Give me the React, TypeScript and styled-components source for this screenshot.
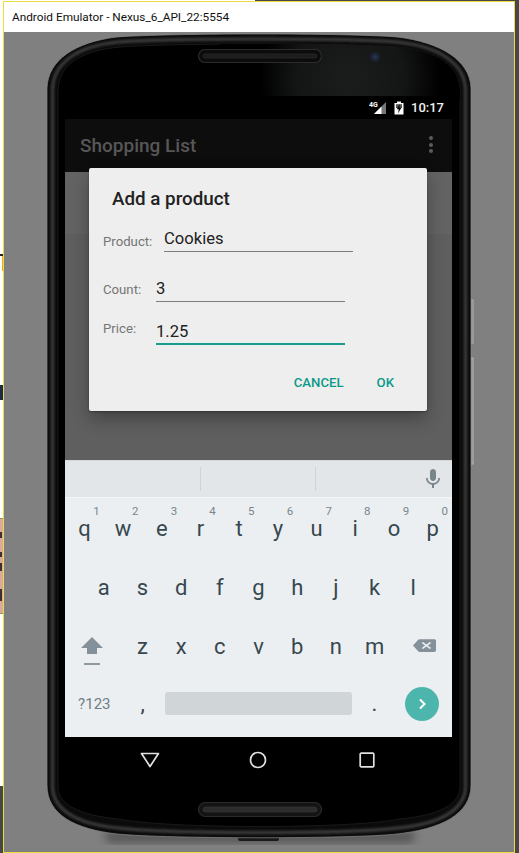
import React from "react";
import styled, { createGlobalStyle } from "styled-components";

const Global = createGlobalStyle`
  html, body { margin: 0; padding: 0; background: #45474a; }
  * { box-sizing: border-box; }
  body { font-family: Roboto, "Liberation Sans", sans-serif; overflow: hidden; }
`;

const Desktop = styled.div`
  width: 519px;
  height: 853px;
  display: flex;
  flex-direction: column;
  background: #45474a;
  overflow: hidden;
`;
const TopEdge = styled.div`
  height: 1px;
  width: 255px;
  background: #fff;
  flex: none;
`;
const Main = styled.div`
  flex: 1;
  display: flex;
`;
const LeftStrip = styled.div`
  width: 3px;
  flex: none;
  display: flex;
  flex-direction: column;
  background: #fff;
`;
const Gap = styled.div<{ $h: number }>`
  height: ${(p) => p.$h}px;
  flex: none;
`;
const Fragment = styled.div<{ $h: number; $c: string; $right?: string }>`
  height: ${(p) => p.$h}px;
  flex: none;
  background: ${(p) => p.$c};
  border-right: ${(p) => (p.$right ? `1px solid ${p.$right}` : "none")};
`;
const PinkBlock = styled.div`
  height: 96px;
  flex: none;
  background: #d9a9a2;
  border-top: 1px solid #8c9a5c;
  border-bottom: 1px solid #8c9a5c;
  display: flex;
  flex-direction: column;
`;
const PinkMark = styled.div<{ $h: number; $mt: number }>`
  height: ${(p) => p.$h}px;
  margin-top: ${(p) => p.$mt}px;
  background: #3a2f3a;
  width: 2px;
  flex: none;
`;
const DarkEnd = styled.div`
  flex: 1;
  background: #45474a;
`;
const Win = styled.div`
  width: 512px;
  height: 852px;
  flex: none;
  border: 1px solid #ecdc3e;
  display: flex;
  flex-direction: column;
`;
const TitleBar = styled.div`
  height: 30px;
  flex: none;
  background: #fff;
  color: #111;
  font: 400 11.8px/30px Roboto, "Liberation Sans", Arial, sans-serif;
  padding-left: 8px;
`;
const Stage = styled.div`
  flex: 1;
  position: relative;
  background: #808080;
  padding: 64px 0 0 61px;
`;
const Shell = styled.svg`
  position: absolute;
  left: 0;
  top: 0;
  width: 510px;
  height: 820px;
`;
const Screen = styled.div`
  position: relative;
  width: 387px;
  height: 688px;
  background: #000;
  display: flex;
  flex-direction: column;
`;
const StatusBar = styled.div`
  height: 23px;
  flex: none;
  display: flex;
  align-items: center;
  justify-content: flex-end;
  padding-right: 8px;
  color: #f2f2f2;
  font-size: 13px;
  font-weight: 500;
  gap: 7px;
`;
const ActionBar = styled.div`
  height: 53px;
  flex: none;
  background: #0d0d0d;
  display: flex;
  align-items: center;
  justify-content: space-between;
  padding: 0 19px 0 15px;
`;
const AppTitle = styled.div`
  color: #575757;
  font-size: 19px;
  font-weight: 500;
`;
const Dots = styled.div`
  display: flex;
  flex-direction: column;
  gap: 2.5px;
  margin-bottom: 2px;
`;
const Dot = styled.span`
  width: 4px;
  height: 4px;
  border-radius: 50%;
  background: #5c5c5c;
`;
const Dim = styled.div`
  height: 288px;
  flex: none;
  position: relative;
  background: #5f5f5f;
`;
const ListRow = styled.div`
  height: 62px;
  background: #636363;
`;
const Dialog = styled.div`
  position: absolute;
  left: 24px;
  top: -4px;
  width: 338px;
  height: 243px;
  background: #eeeeee;
  border-radius: 2px;
  padding-top: 17px;
  box-shadow: 0 8px 18px rgba(0, 0, 0, 0.3), 0 1px 2px rgba(0, 0, 0, 0.3);
`;
const DialogTitle = styled.div`
  padding-left: 23px;
  color: #212121;
  font-size: 18.8px;
  line-height: 28px;
  font-weight: 500;
`;
const FieldRow = styled.div<{ $mt: number }>`
  display: flex;
  align-items: flex-start;
  margin-top: ${(p) => p.$mt}px;
  padding-left: 14px;
`;
const FieldLabel = styled.div<{ $w: number; $pt: number }>`
  width: ${(p) => p.$w}px;
  padding-top: ${(p) => p.$pt}px;
  color: #757575;
  font-size: 13.2px;
  line-height: 20px;
`;
const FieldValue = styled.div<{ $active?: boolean }>`
  width: 189px;
  height: 30px;
  color: #212121;
  font-size: 16.6px;
  line-height: 34px;
  border-bottom: ${(p) => (p.$active ? "2px solid #1a9c8c" : "1px solid #7c7c7c")};
`;
const DialogActions = styled.div`
  display: flex;
  justify-content: flex-end;
  gap: 33px;
  margin-top: 19px;
  padding-right: 33px;
  height: 36px;
  align-items: center;
`;
const ActionText = styled.div`
  color: #0a9a88;
  font-size: 13.2px;
  font-weight: 500;
`;
const Keyboard = styled.div`
  height: 277px;
  flex: none;
  background: #eceff1;
  display: flex;
  flex-direction: column;
`;
const Suggestions = styled.div`
  height: 38px;
  flex: none;
  background: #e3e6e8;
  border-top: 1px solid #d6d9db;
  border-bottom: 1px solid #f3f5f6;
  display: grid;
  grid-template-columns: 136px 115px 114px 22px;
  align-items: center;
`;
const SuggestCell = styled.div`
  height: 24px;
  border-right: 1px solid #d0d4d6;
`;
const MicWrap = styled.div`
  display: flex;
  margin-left: -9px;
`;
const KeyRow = styled.div<{ $h: number; $pb?: number }>`
  height: ${(p) => p.$h}px;
  flex: none;
  display: flex;
  justify-content: center;
  align-items: center;
  padding-bottom: ${(p) => p.$pb ?? 0}px;
`;
const Key = styled.div`
  position: relative;
  width: 38.7px;
  height: 100%;
  display: flex;
  align-items: center;
  justify-content: center;
  color: #37474f;
  font-size: 22px;
`;
const Hint = styled.span`
  position: absolute;
  top: 6px;
  right: 4px;
  color: #78868c;
  font-size: 11.5px;
`;
const SideKey = styled.div`
  width: 58px;
  height: 100%;
  display: flex;
  align-items: center;
  justify-content: center;
`;
const ShiftIcon = styled.svg`
  margin: 9px 4px 0 0;
`;
const DeleteIcon = styled.svg`
  margin: -2px 0 0 4px;
`;
const SymbolKey = styled(SideKey)`
  color: #6f7f87;
  font-size: 15px;
`;
const PunctKey = styled.div`
  width: 38.7px;
  height: 100%;
  display: flex;
  align-items: center;
  justify-content: center;
  color: #37474f;
  font-size: 22px;
`;
const SpaceWrap = styled.div`
  width: 193px;
  display: flex;
  justify-content: center;
`;
const SpaceBar = styled.div`
  width: 187px;
  height: 23px;
  border-radius: 3px;
  background: #d0d5d8;
`;
const GoKey = styled.div`
  width: 34px;
  height: 34px;
  margin: 0 13px 0 11px;
  border-radius: 50%;
  background: #4db6ac;
  display: flex;
  align-items: center;
  justify-content: center;
`;
const NavBar = styled.div`
  flex: 1;
  display: flex;
  justify-content: center;
  align-items: center;
  padding: 0 1px 1px 0;
`;
const NavCell = styled.div`
  width: 108.5px;
  display: flex;
  justify-content: center;
`;

const row1 = [["q","1"],["w","2"],["e","3"],["r","4"],["t","5"],["y","6"],["u","7"],["i","8"],["o","9"],["p","0"]];
const row2 = ["a","s","d","f","g","h","j","k","l"];
const row3 = ["z","x","c","v","b","n","m"];

const outer = "M47 88 C48 60 75 42 117 37 C170 33 350 33 397 37 C440 42 470 60 471 88 L471 785 C471 815 440 829 397 834 C350 839 170 839 117 834 C75 829 47 815 47 785 Z";
const middle = "M52.5 90 C53 63 77 46 118 42 C170 38 350 38 397 42 C438 46 465 63 465.5 90 L465.5 786 C465.5 810 440 824 398 828 C350 834 170 834 118 828 C77 824 52.5 810 52.5 786 Z";
const face = "M58 92 C58 66 78 51 120 47 C170 43 350 43 397 47 C438 51 460 66 460 92 L460 787 C460 804 440 815 400 819 C350 829 170 829 118 819 C78 815 58 804 58 787 Z";

function PhoneShell() {
  return (
    <Shell viewBox="4 32 510 820">
      <defs>
        <radialGradient id="glare" cx="350" cy="78" r="90" gradientUnits="userSpaceOnUse">
          <stop offset="0" stopColor="#1b1d1d" />
          <stop offset="0.6" stopColor="#141515" />
          <stop offset="1" stopColor="#000" />
        </radialGradient>
        <clipPath id="faceClip"><path d={face} /></clipPath>
        <filter id="soft"><feGaussianBlur stdDeviation="1" /></filter>
        <filter id="softer"><feGaussianBlur stdDeviation="4" /></filter>
      </defs>
      <rect x="105" y="830" width="310" height="13" rx="6" fill="#4a4a4a" filter="url(#softer)" opacity="0.75" />
      <rect x="238" y="836" width="41" height="5" rx="2" fill="#1a1a1a" />
      <rect x="471" y="300" width="2" height="43" fill="none" stroke="#bdbdbd" strokeWidth="0.8" />
      <rect x="471" y="358" width="2" height="106" fill="none" stroke="#c8c8c8" strokeWidth="0.8" />
      <path d={outer} fill="#0b0b0b" stroke="#8a8a8a" strokeWidth="0.7" />
      <path d={middle} fill="none" stroke="#383838" strokeWidth="3.5" filter="url(#soft)" />
      <path d={face} fill="#000" stroke="#191919" strokeWidth="1" />
      <g clipPath="url(#faceClip)">
        <rect x="220" y="40" width="245" height="60" fill="url(#glare)" />
      </g>
      <rect x="198.5" y="49.5" width="123" height="13" rx="6.5" fill="#0c0c0c" stroke="#2c2c2c" strokeWidth="1.2" />
      <rect x="203" y="54" width="114" height="4" rx="2" fill="#1c1c1c" stroke="#303030" strokeWidth="0.6" />
      <circle cx="375" cy="57" r="5" fill="#1b2233" />
      <circle cx="375" cy="57" r="2.5" fill="#252f4a" />
      <rect x="198.5" y="802.5" width="123" height="14" rx="7" fill="#141414" stroke="#2a2a2a" strokeWidth="1.2" />
      <rect x="203" y="807" width="114" height="5" rx="2.5" fill="#2c2c2c" stroke="#3a3a3a" strokeWidth="0.6" />
    </Shell>
  );
}

function SignalIcon() {
  return (
    <svg width="18" height="14" viewBox="0 0 18 14">
      <path d="M5 13 L17 1 V13 Z" fill="#777" />
      <path d="M5 13 L12.5 5.5 V13 Z" fill="#fff" />
      <text x="0" y="6" fill="#fff" fontSize="7" fontWeight="700" fontFamily="Roboto, sans-serif">4G</text>
    </svg>
  );
}
function BatteryIcon() {
  return (
    <svg width="10" height="14" viewBox="0 0 10 14">
      <path d="M3 0.5 H7 V2 H9.5 V13.5 H0.5 V2 H3 Z" fill="#fff" />
      <path d="M2 3.2 H8 V7 H2 Z" fill="#555" />
      <path d="M5.8 3 L2.8 8.2 H4.8 L4 12.5 L7.4 6.8 H5.3 Z" fill="#000" />
    </svg>
  );
}

export default function App() {
  return (
    <Desktop>
      <Global />
      <TopEdge />
      <Main>
        <LeftStrip>
          <Gap $h={253} />
          <Fragment $h={2} $c="#222" />
          <Fragment $h={15} $c="#fff" $right="#e8a92c" />
          <Gap $h={114} />
          <Fragment $h={15} $c="#1b2a4d" />
          <Gap $h={118} />
          <PinkBlock>
            <PinkMark $h={6} $mt={13} />
            <PinkMark $h={5} $mt={14} />
            <PinkMark $h={8} $mt={6} />
            <PinkMark $h={12} $mt={18} />
          </PinkBlock>
          <Gap $h={172} />
          <DarkEnd />
        </LeftStrip>
        <Win>
          <TitleBar>Android Emulator - Nexus_6_API_22:5554</TitleBar>
          <Stage>
            <PhoneShell />
            <Screen>
              <StatusBar>
                <SignalIcon />
                <BatteryIcon />
                <span>10:17</span>
              </StatusBar>
              <ActionBar>
                <AppTitle>Shopping List</AppTitle>
                <Dots><Dot /><Dot /><Dot /></Dots>
              </ActionBar>
              <Dim>
                <ListRow />
                <Dialog>
                  <DialogTitle>Add a product</DialogTitle>
                  <FieldRow $mt={9}>
                    <FieldLabel $w={61} $pt={10}>Product:</FieldLabel>
                    <FieldValue>Cookies</FieldValue>
                  </FieldRow>
                  <FieldRow $mt={20}>
                    <FieldLabel $w={53} $pt={8}>Count:</FieldLabel>
                    <FieldValue>3</FieldValue>
                  </FieldRow>
                  <FieldRow $mt={13}>
                    <FieldLabel $w={53} $pt={4}>Price:</FieldLabel>
                    <FieldValue $active>1.25</FieldValue>
                  </FieldRow>
                  <DialogActions>
                    <ActionText>CANCEL</ActionText>
                    <ActionText>OK</ActionText>
                  </DialogActions>
                </Dialog>
              </Dim>
              <Keyboard>
                <Suggestions>
                  <SuggestCell />
                  <SuggestCell />
                  <div />
                  <MicWrap>
                    <svg width="24" height="24" viewBox="0 0 24 24" fill="#78868c">
                      <path d="M12 14c1.66 0 2.99-1.34 2.99-3L15 5c0-1.66-1.34-3-3-3S9 3.34 9 5v6c0 1.66 1.34 3 3 3zm5.3-3c0 3-2.54 5.1-5.3 5.1S6.7 14 6.7 11H5c0 3.41 2.72 6.23 6 6.72V21h2v-3.28c3.28-.48 6-3.3 6-6.72h-1.7z" />
                    </svg>
                  </MicWrap>
                </Suggestions>
                <KeyRow $h={60}>
                  {row1.map(([k, n]) => (
                    <Key key={k}>{k}<Hint>{n}</Hint></Key>
                  ))}
                </KeyRow>
                <KeyRow $h={59}>
                  {row2.map((k) => <Key key={k}>{k}</Key>)}
                </KeyRow>
                <KeyRow $h={59}>
                  <SideKey>
                    <ShiftIcon width="24" height="30" viewBox="0 0 24 30" fill="#84909a">
                      <path d="M12 1 L23 12 H17 V18 H7 V12 H1 Z" />
                      <rect x="4" y="27" width="16" height="2" fill="#8f9aa0" />
                    </ShiftIcon>
                  </SideKey>
                  {row3.map((k) => <Key key={k}>{k}</Key>)}
                  <SideKey>
                    <DeleteIcon width="23" height="17" viewBox="0 0 24 24" preserveAspectRatio="none" fill="#84909a">
                      <path d="M22 3H7c-.69 0-1.23.35-1.59.88L0 12l5.41 8.11c.36.53.9.89 1.59.89h15c1.1 0 2-.9 2-2V5c0-1.1-.9-2-2-2zm-3 12.59L17.59 17 14 13.41 10.41 17 9 15.59 12.59 12 9 8.41 10.41 7 14 10.59 17.59 7 19 8.41 15.41 12 19 15.59z" />
                    </DeleteIcon>
                  </SideKey>
                </KeyRow>
                <KeyRow $h={61} $pb={6}>
                  <SymbolKey>?123</SymbolKey>
                  <PunctKey>,</PunctKey>
                  <SpaceWrap><SpaceBar /></SpaceWrap>
                  <PunctKey>.</PunctKey>
                  <GoKey>
                    <svg width="14" height="14" viewBox="0 0 14 14" fill="none" stroke="#fff" strokeWidth="2">
                      <path d="M5 2.5 L9.5 7 L5 11.5" />
                    </svg>
                  </GoKey>
                </KeyRow>
              </Keyboard>
              <NavBar>
                <NavCell>
                  <svg width="20" height="16" viewBox="0 0 20 16" fill="none" stroke="#e0e0e0" strokeWidth="1.7">
                    <path d="M1.5 1.5 H18.5 L10 14.5 Z" strokeLinejoin="round" />
                  </svg>
                </NavCell>
                <NavCell>
                  <svg width="18" height="18" viewBox="0 0 18 18" fill="none" stroke="#e0e0e0" strokeWidth="1.7">
                    <circle cx="9" cy="9" r="7.5" />
                  </svg>
                </NavCell>
                <NavCell>
                  <svg width="16" height="16" viewBox="0 0 16 16" fill="none" stroke="#e0e0e0" strokeWidth="1.7">
                    <rect x="1.2" y="1.2" width="13.6" height="13.6" rx="1" />
                  </svg>
                </NavCell>
              </NavBar>
            </Screen>
          </Stage>
        </Win>
      </Main>
    </Desktop>
  );
}
